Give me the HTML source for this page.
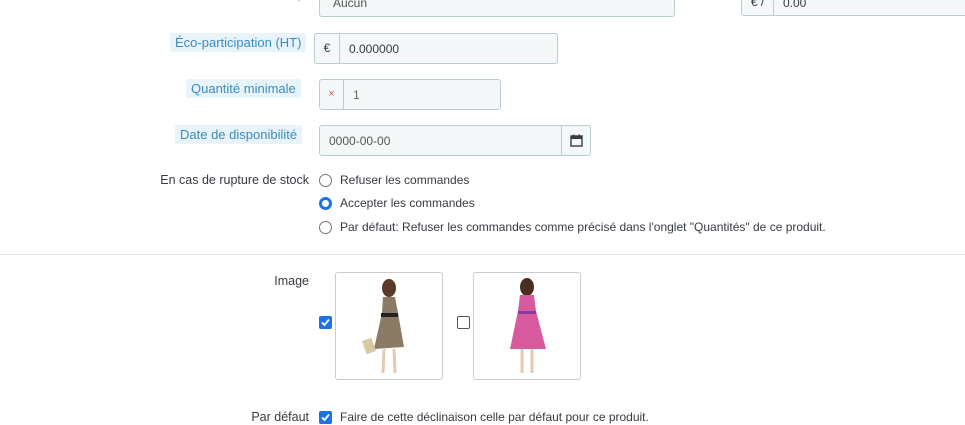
<!DOCTYPE html>
<html><head><meta charset="utf-8"><style>
body{margin:0;width:965px;height:425px;overflow:hidden;background:#fff;font-family:"Liberation Sans",sans-serif;font-size:12px;color:#363a41;position:relative}
.a{position:absolute}
.lbl{position:absolute;background:#e8f4fa;color:#3a8cbf;font-size:13px;height:19px;line-height:19px;padding:0 5px;border-radius:2px}
.r{position:absolute;right:656px;text-align:right;font-size:12.5px;color:#363a41}
.inp{position:absolute;background:#f5f8f9;border:1px solid #bbcdd2;border-radius:3px;box-sizing:border-box}
.add{position:absolute;top:0;bottom:0;left:0;border-right:1px solid #bbcdd2;text-align:center;line-height:28px;font-size:12px}
.rad{position:absolute;left:319px;width:13px;height:13px;border:1px solid #777;border-radius:50%;box-sizing:border-box}
.rt{position:absolute;left:340px;font-size:12px}
.cb{position:absolute;width:13px;height:13px;border-radius:2px;box-sizing:border-box}
.th{position:absolute;top:272px;width:108px;height:108px;border:1px solid #ccc;border-radius:3px;box-sizing:border-box}
</style></head><body>
<div class="r" style="top:-13px">ix de vente pr</div>
<div class="inp" style="left:319px;top:-15px;width:356px;height:32px"><span class="a" style="left:13px;top:10px;color:#555">Aucun</span><span class="a" style="right:6px;top:6px;font-size:10px">&#8964;</span></div>
<div class="inp" style="left:741px;top:-15px;width:240px;height:31px"><div class="add" style="width:31px;line-height:32px">€ /</div><span class="a" style="left:41px;top:10px">0.00</span></div>

<div class="lbl" style="left:170px;top:33px">Éco-participation (HT)</div>
<div class="inp" style="left:314px;top:33px;width:244px;height:31px"><div class="add" style="width:24px">€</div><span class="a" style="left:34px;top:8px">0.000000</span></div>

<div class="lbl" style="left:186px;top:79px">Quantité minimale</div>
<div class="inp" style="left:319px;top:79px;width:182px;height:31px"><div class="add" style="width:23px;color:#c05c3c;font-size:11px">×</div><span class="a" style="left:33px;top:8px;color:#666">1</span></div>

<div class="lbl" style="left:175px;top:125px">Date de disponibilité</div>
<div class="inp" style="left:319px;top:125px;width:272px;height:31px"><span class="a" style="left:9px;top:8px;color:#555">0000-00-00</span>
<div class="a" style="left:241px;top:0;bottom:0;width:30px;border-left:1px solid #bbcdd2">
<svg class="a" style="left:8px;top:8px" width="13" height="13" viewBox="0 0 13 13"><rect x="1" y="2" width="11" height="10" fill="none" stroke="#363a41" stroke-width="1.4"/><rect x="1" y="2" width="11" height="3" fill="#363a41"/><rect x="3" y="0.5" width="1.5" height="3" fill="#363a41"/><rect x="8.5" y="0.5" width="1.5" height="3" fill="#363a41"/></svg></div></div>

<div class="r" style="top:173px">En cas de rupture de stock</div>
<div class="rad" style="top:174px"></div><div class="rt" style="top:173px">Refuser les commandes</div>
<div class="rad" style="top:197px;border:3.5px solid #1a73e8"></div><div class="rt" style="top:196px">Accepter les commandes</div>
<div class="rad" style="top:221px"></div><div class="rt" style="top:220px">Par défaut: Refuser les commandes comme précisé dans l'onglet "Quantités" de ce produit.</div>

<div class="a" style="left:0;top:254px;width:965px;height:1px;background:#e6e6e6"></div>

<div class="r" style="top:274px">Image</div>
<div class="cb" style="left:319px;top:316px;background:#1a73e8"><svg class="a" style="left:2px;top:2px" width="9" height="9" viewBox="0 0 9 9"><path d="M1 4.5L3.5 7L8 1.5" fill="none" stroke="#fff" stroke-width="1.8"/></svg></div>
<div class="th" style="left:335px"><svg class="a" style="left:20px;top:6px" width="66" height="96" viewBox="0 0 66 96"><ellipse cx="33" cy="9" rx="7" ry="9" fill="#5a3a28"/><path d="M27 18 L39 18 L42 34 L48 68 L18 70 L26 34Z" fill="#8a7a66"/><rect x="25" y="34" width="17" height="4" fill="#222"/><rect x="8" y="60" width="10" height="14" fill="#d8c9a0" transform="rotate(-20 13 67)"/><path d="M28 70 L27 94 M38 70 L39 94" stroke="#e8c8b0" stroke-width="3"/></svg></div>
<div class="cb" style="left:457px;top:316px;border:1px solid #555"></div>
<div class="th" style="left:473px"><svg class="a" style="left:20px;top:4px" width="66" height="98" viewBox="0 0 66 98"><ellipse cx="33" cy="10" rx="7" ry="9" fill="#4a2e20"/><path d="M26 18 L40 18 L42 34 L52 72 L16 72 L24 34Z" fill="#d75a9e"/><rect x="24" y="34" width="18" height="3" fill="#8a3a9a"/><path d="M28 72 L28 96 M38 72 L38 96" stroke="#e8c8b0" stroke-width="3"/></svg></div>

<div class="r" style="top:410px">Par défaut</div>
<div class="cb" style="left:319px;top:411px;background:#1a73e8"><svg class="a" style="left:2px;top:2px" width="9" height="9" viewBox="0 0 9 9"><path d="M1 4.5L3.5 7L8 1.5" fill="none" stroke="#fff" stroke-width="1.8"/></svg></div>
<div class="rt" style="top:410px">Faire de cette déclinaison celle par défaut pour ce produit.</div>
</body></html>
